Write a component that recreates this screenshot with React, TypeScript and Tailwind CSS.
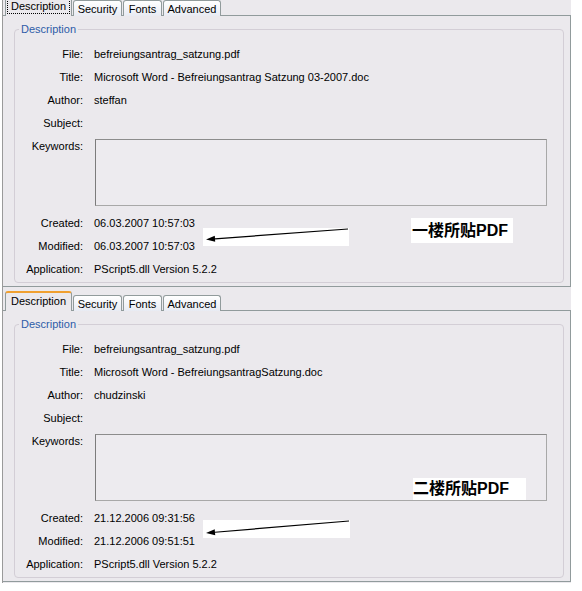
type DocInfo = {
  file: string
  title: string
  author: string
  created: string
  modified: string
  app: string
}

const first: DocInfo = {
  file: 'befreiungsantrag_satzung.pdf',
  title: 'Microsoft Word - Befreiungsantrag Satzung 03-2007.doc',
  author: 'steffan',
  created: '06.03.2007 10:57:03',
  modified: '06.03.2007 10:57:03',
  app: 'PScript5.dll Version 5.2.2',
}

const second: DocInfo = {
  file: 'befreiungsantrag_satzung.pdf',
  title: 'Microsoft Word - BefreiungsantragSatzung.doc',
  author: 'chudzinski',
  created: '21.12.2006 09:31:56',
  modified: '21.12.2006 09:51:51',
  app: 'PScript5.dll Version 5.2.2',
}

function Row({ label, value }: { label: string; value?: string }) {
  return (
    <>
      <div className="h-[23px] leading-[23px] text-right">{label}</div>
      <div className="h-[23px] leading-[23px] whitespace-nowrap">{value}</div>
    </>
  )
}

function Tabs({ focused }: { focused: boolean }) {
  const inactive =
    'h-[16px] border border-b-0 border-[#919b9c] rounded-t-[3px] bg-gradient-to-b from-white to-[#e8ebf3] flex items-center justify-center pt-[1px]'
  return (
    <div className="h-[21px] flex items-end pl-[2px] gap-[1px] -mb-px relative z-10">
      <div className="h-[20px] w-[67px] rounded-t-[3px] border-x border-[#919b9c] border-t-[2px] border-t-[#f0a030] bg-[#ebe9ed] flex items-start justify-center pt-[1px]">
        <span className={focused ? 'border border-dotted border-black px-[3px] leading-[13px]' : 'leading-[15px]'}>
          Description
        </span>
      </div>
      <div className={`${inactive} w-[49px]`}>Security</div>
      <div className={`${inactive} w-[39px]`}>Fonts</div>
      <div className={`${inactive} w-[58px]`}>Advanced</div>
    </div>
  )
}

function Shot({ info, focused, className }: { info: DocInfo; focused: boolean; className: string }) {
  return (
    <div className={`ml-[2px] w-[569px] border-l border-[#9a9a9a] bg-[#ebe9ed] overflow-hidden ${className}`}>
      <Tabs focused={focused} />
      <div className="border-t border-r border-b border-[#919b9c] pt-[13px] pb-[3px] pl-[11px] pr-[6px]">
        <div className="relative border border-[#d3ced6] rounded-[4px] pt-[13px] pb-[1px]">
          <span className="absolute -top-[8px] left-[4px] px-[2px] bg-[#ebe9ed] text-[#2d5ca8] leading-[14px]">
            Description
          </span>
          <div className="grid grid-cols-[68px_1fr] gap-x-[11px]">
            <Row label="File:" value={info.file} />
            <Row label="Title:" value={info.title} />
            <Row label="Author:" value={info.author} />
            <Row label="Subject:" />
            <div className="h-[77px] leading-[23px] text-right">Keywords:</div>
            <div className="h-[77px] pt-[4px]">
              <div className="ml-[1px] w-[452px] h-[67px] border border-[#a8a8a8] border-l-[#7c7c7c] border-t-[#8c8c8c] bg-[#edebef]" />
            </div>
            <Row label="Created:" value={info.created} />
            <Row label="Modified:" value={info.modified} />
            <Row label="Application:" value={info.app} />
          </div>
        </div>
      </div>
    </div>
  )
}

function Arrow({ left, top, width, height, y1, y2 }: { left: number; top: number; width: number; height: number; y1: number; y2: number }) {
  const tipX = 3
  const endX = width - 1
  const dx = tipX - endX
  const dy = y2 - y1
  const len = Math.hypot(dx, dy)
  const ux = dx / len
  const uy = dy / len
  const bx = tipX - ux * 9
  const by = y2 - uy * 9
  const px = -uy * 3
  const py = ux * 3
  return (
    <svg className="absolute" style={{ left, top }} width={width} height={height}>
      <rect x={0} y={0} width={width} height={height} fill="#fff" />
      <line x1={endX} y1={y1} x2={bx} y2={by} stroke="#000" strokeWidth={1.2} />
      <polygon points={`${tipX},${y2} ${bx + px},${by + py} ${bx - px},${by - py}`} fill="#000" />
    </svg>
  )
}

export default function App() {
  return (
    <div className="relative w-[582px] h-[591px] bg-white overflow-hidden text-[11px] text-black font-['Tahoma','Liberation_Sans',sans-serif]">
      <Shot info={first} focused className="-mt-[5px] h-[295px]" />
      <Shot info={second} focused={false} className="h-[293px]" />

      <Arrow left={203} top={228} width={146} height={18} y1={1} y2={11.5} />
      <Arrow left={203} top={520} width={147} height={18} y1={1} y2={13} />

      <div className="absolute left-[411px] top-[218px] w-[102px] h-[25px] bg-white pl-[1px] text-[16px] leading-[25px] font-bold font-['Liberation_Sans','Noto_Sans_CJK_SC',sans-serif]">
        一楼所贴PDF
      </div>
      <div className="absolute left-[413px] top-[478px] w-[113px] h-[22px] bg-white text-[16px] leading-[22px] font-bold font-['Liberation_Sans','Noto_Sans_CJK_SC',sans-serif]">
        二楼所贴PDF
      </div>
    </div>
  )
}
